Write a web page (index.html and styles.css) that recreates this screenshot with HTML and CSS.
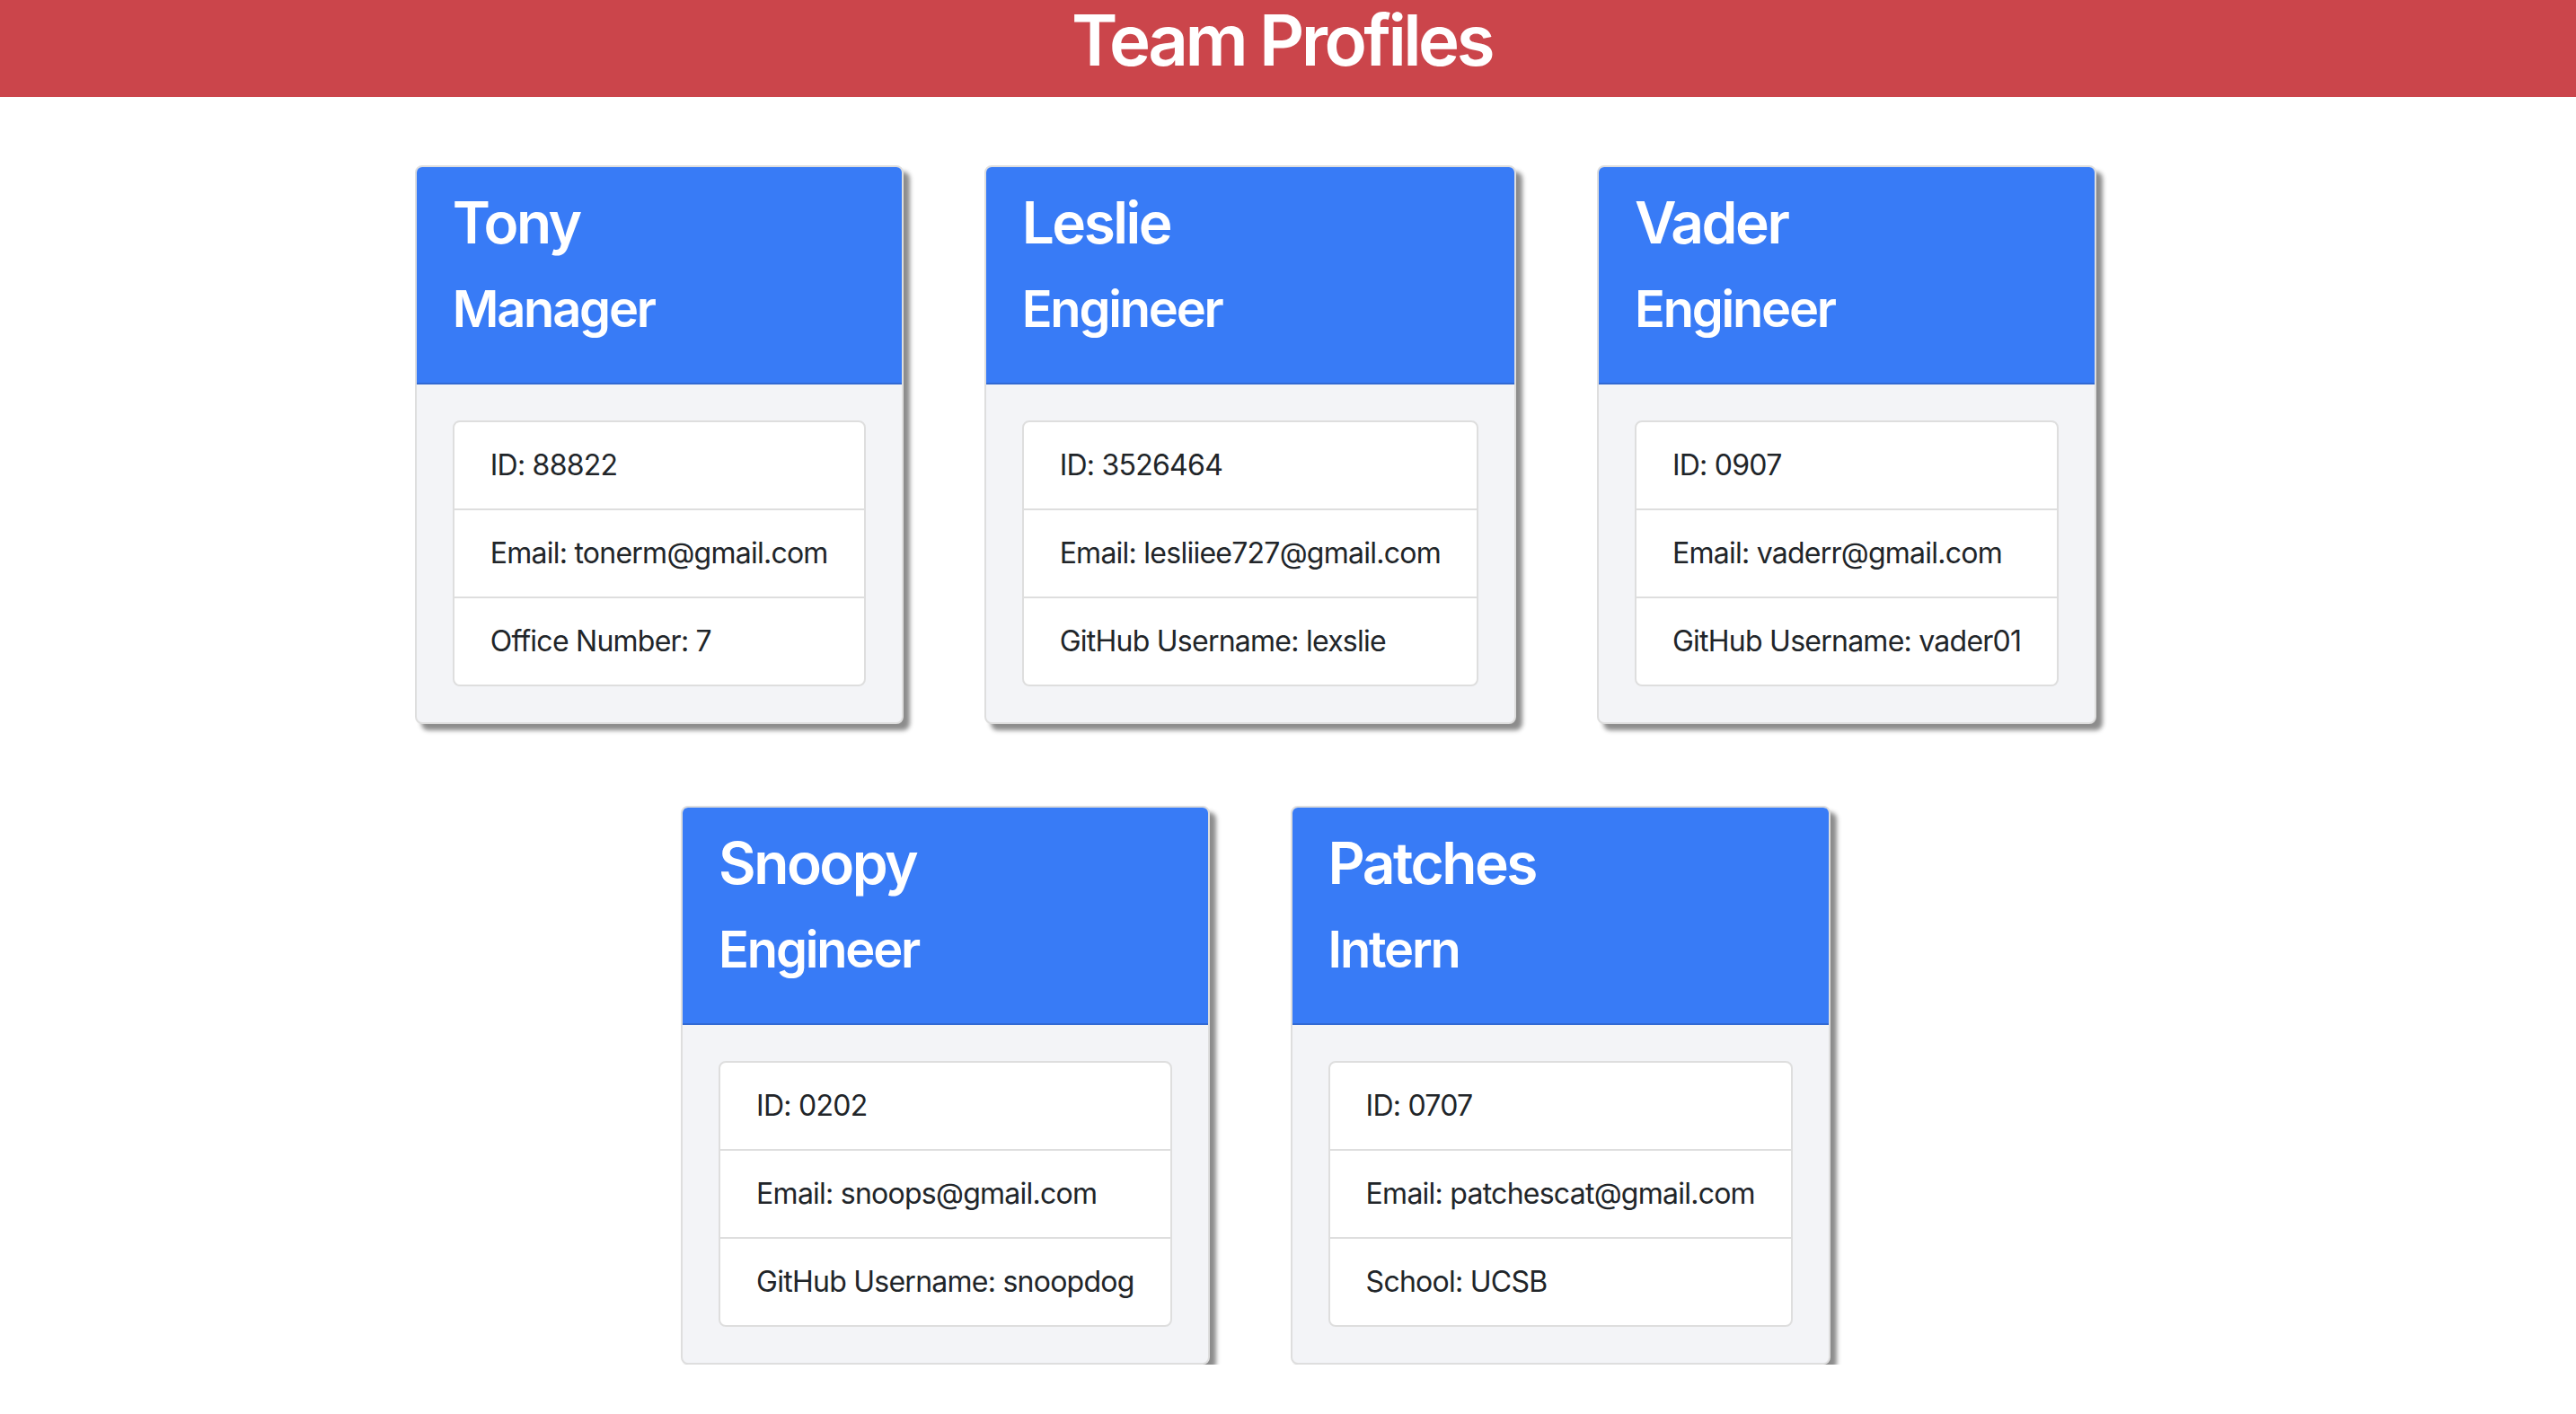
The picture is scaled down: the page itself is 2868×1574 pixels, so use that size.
FILE: index.html
```html
<!DOCTYPE html>
<html lang="en">
<head>
<meta charset="utf-8">
<title>Team Profiles</title>
<link rel="stylesheet" href="styles.css">
</head>
<body>
<header class="banner">
  <h1 class="banner-title">Team Profiles</h1>
</header>
<main class="team">
  <div class="card">
    <div class="card-header">
      <h2 class="card-name">Tony</h2>
      <h3 class="card-role">Manager</h3>
    </div>
    <div class="card-body">
      <ul class="info-list">
        <li class="info-item">ID: 88822</li>
        <li class="info-item">Email: tonerm@gmail.com</li>
        <li class="info-item">Office Number: 7</li>
      </ul>
    </div>
  </div>
  <div class="card">
    <div class="card-header">
      <h2 class="card-name">Leslie</h2>
      <h3 class="card-role">Engineer</h3>
    </div>
    <div class="card-body">
      <ul class="info-list">
        <li class="info-item">ID: 3526464</li>
        <li class="info-item">Email: lesliiee727@gmail.com</li>
        <li class="info-item">GitHub Username: lexslie</li>
      </ul>
    </div>
  </div>
  <div class="card">
    <div class="card-header">
      <h2 class="card-name">Vader</h2>
      <h3 class="card-role">Engineer</h3>
    </div>
    <div class="card-body">
      <ul class="info-list">
        <li class="info-item">ID: 0907</li>
        <li class="info-item">Email: vaderr@gmail.com</li>
        <li class="info-item">GitHub Username: vader01</li>
      </ul>
    </div>
  </div>
  <div class="card">
    <div class="card-header">
      <h2 class="card-name">Snoopy</h2>
      <h3 class="card-role">Engineer</h3>
    </div>
    <div class="card-body">
      <ul class="info-list">
        <li class="info-item">ID: 0202</li>
        <li class="info-item">Email: snoops@gmail.com</li>
        <li class="info-item">GitHub Username: snoopdog</li>
      </ul>
    </div>
  </div>
  <div class="card">
    <div class="card-header">
      <h2 class="card-name">Patches</h2>
      <h3 class="card-role">Intern</h3>
    </div>
    <div class="card-body">
      <ul class="info-list">
        <li class="info-item">ID: 0707</li>
        <li class="info-item">Email: patchescat@gmail.com</li>
        <li class="info-item">School: UCSB</li>
      </ul>
    </div>
  </div>
</main>
</body>
</html>
```
FILE: styles.css
```css
* {
  box-sizing: border-box;
}

body {
  margin: 0;
  font-family: Inter, "Noto Sans", "Liberation Sans", sans-serif;
  font-size: 32px;
  line-height: 1.5;
  color: #212529;
  background: #ffffff;
}

.banner {
  height: 108px;
  background: #cb454b;
  padding-bottom: 18px;
}

.banner-title {
  margin: 0;
  padding-right: 14px;
  text-align: center;
  color: #ffffff;
  font-size: 78px;
  font-weight: 600;
  line-height: 90px;
  letter-spacing: -3.6px;
}

.team {
  max-width: 2280px;
  box-sizing: content-box;
  margin: 76px auto 0;
  padding-right: 72px;
  display: flex;
  flex-wrap: wrap;
  justify-content: center;
  column-gap: 90px;
  row-gap: 91px;
}

.card {
  display: flex;
  flex-direction: column;
  border: 2px solid #dedede;
  border-radius: 8px;
  background: #f3f4f7;
  box-shadow: 7px 7px 5px rgba(0, 0, 0, 0.45);
}

.card-header {
  background: #387bf6;
  color: #ffffff;
  padding: 24px 40px;
  border-bottom: 2px solid #3169d3;
  border-radius: 6px 6px 0 0;
}

.card-name {
  margin: 0 0 24px;
  font-size: 64px;
  font-weight: 600;
  line-height: 76.8px;
  letter-spacing: -2.5px;
}

.card-role {
  margin: 0 0 24px;
  font-size: 56px;
  font-weight: 600;
  line-height: 67.2px;
  letter-spacing: -2.2px;
}

.card-body {
  padding: 40px;
}

.info-list {
  list-style: none;
  margin: 0;
  padding: 0;
  background: #ffffff;
  border: 2px solid #dedede;
  border-radius: 8px;
}

.info-item {
  padding: 24px 40px;
  white-space: nowrap;
  letter-spacing: -0.75px;
}

.info-item + .info-item {
  border-top: 2px solid #dedede;
}
```
